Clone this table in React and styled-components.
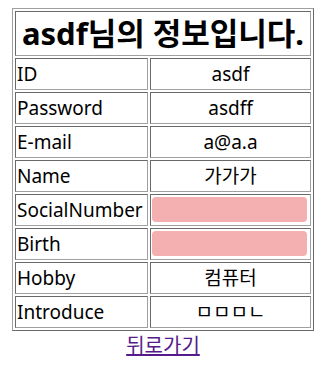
import React from 'react';
import styled, { createGlobalStyle } from 'styled-components';

const GlobalStyle = createGlobalStyle`
  body {
    margin: 8px;
    background: #fff;
    font-family: "Noto Sans", "Noto Sans CJK KR", sans-serif;
    color: #000;
  }
`;

const InfoTable = styled.table`
  width: 302px;
  margin: 0 auto;
  border: 1px solid;
  border-color: #a0a0a0 #696969 #696969 #a0a0a0;
  border-collapse: separate;
  border-spacing: 2px;
`;

const TitleCell = styled.th`
  border: 1px solid;
  border-color: #696969 #a0a0a0 #a0a0a0 #696969;
  padding: 1px;
  font-size: 31px;
  font-weight: 700;
  line-height: 41px;
  text-align: center;
  white-space: nowrap;
`;

const Cell = styled.td`
  border: 1px solid;
  border-color: #696969 #a0a0a0 #a0a0a0 #696969;
  padding: 1px;
  font-size: 19px;
  line-height: 28px;
  text-align: ${(p) => (p.$label ? 'left' : 'center')};
  width: ${(p) => (p.$label ? '133px' : 'auto')};
  box-sizing: border-box;
  white-space: nowrap;
`;

const PinkField = styled.div`
  width: 155px;
  height: 25px;
  margin: 1px 0 2px;
  border-radius: 4px;
  background: #f4b0b0;
`;

const Footer = styled.div`
  text-align: center;
  font-size: 20px;
  line-height: 30px;
`;

const BackLink = styled.a`
  color: #551a8b;
  text-decoration: underline;
`;

const rows = [
  ['ID', 'asdf'],
  ['Password', 'asdff'],
  ['E-mail', 'a@a.a'],
  ['Name', '가가가'],
  ['SocialNumber', null],
  ['Birth', null],
  ['Hobby', '컴퓨터'],
  ['Introduce', 'ㅁㅁㅁㄴ'],
];

const App = () => {
  return (
    <>
      <GlobalStyle />
      <InfoTable>
        <tbody>
          <tr>
            <TitleCell colSpan={2}>asdf님의 정보입니다.</TitleCell>
          </tr>
          {rows.map(([label, value]) => (
            <tr key={label}>
              <Cell $label>{label}</Cell>
              <Cell>{value === null ? <PinkField /> : value}</Cell>
            </tr>
          ))}
        </tbody>
      </InfoTable>
      <Footer>
        <BackLink href="#">뒤로가기</BackLink>
      </Footer>
    </>
  );
};

export default App;
